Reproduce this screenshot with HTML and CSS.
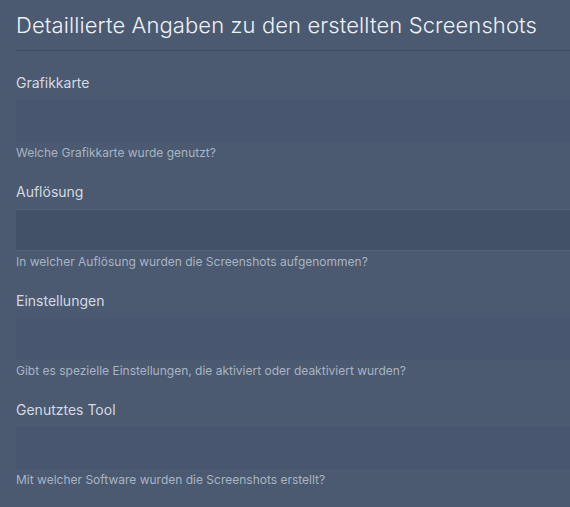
FILE: index.html
```html
<!DOCTYPE html>
<html lang="de">
<head>
<meta charset="utf-8">
<link rel="stylesheet" href="styles.css">
</head>
<body>
<div class="page">
  <h1 class="title">Detaillierte Angaben zu den erstellten Screenshots</h1>
  <div class="field">
    <label class="label">Grafikkarte</label>
    <div class="input"></div>
    <p class="help">Welche Grafikkarte wurde genutzt?</p>
  </div>
  <div class="field">
    <label class="label">Auflösung</label>
    <div class="input input-active"></div>
    <p class="help">In welcher Auflösung wurden die Screenshots aufgenommen?</p>
  </div>
  <div class="field">
    <label class="label">Einstellungen</label>
    <div class="input"></div>
    <p class="help">Gibt es spezielle Einstellungen, die aktiviert oder deaktiviert wurden?</p>
  </div>
  <div class="field">
    <label class="label">Genutztes Tool</label>
    <div class="input"></div>
    <p class="help">Mit welcher Software wurden die Screenshots erstellt?</p>
  </div>
</div>
</body>
</html>
```
FILE: styles.css
```css
html, body {
  margin: 0;
  padding: 0;
  background: #4b5a71;
  height: 100%;
}
body {
  font-family: Inter, "Noto Sans", sans-serif;
  overflow: hidden;
}
.page {
  padding-left: 16px;
}
.title {
  margin: 0;
  padding-top: 11px;
  padding-bottom: 11px;
  font-size: 22px;
  letter-spacing: 0.1px;
  line-height: 28px;
  font-weight: 300;
  color: #eef1f5;
  border-bottom: 1px solid #3f4c5f;
}
.field {
  display: flex;
  flex-direction: column;
}
.field:first-of-type {
  margin-top: 22px;
}
.field + .field {
  margin-top: 21px;
}
.label {
  font-size: 14px;
  line-height: 20px;
  color: #d3d9e2;
}
.input {
  margin-top: 7px;
  height: 42px;
  background: #48576f;
}
.input-active {
  background: #435167;
  border-top: 1px solid #52627a;
  border-bottom: 1px solid #52627a;
  height: 40px;
}
.help {
  margin: 3px 0 0 0;
  font-size: 12px;
  line-height: 16px;
  color: #a9b4c3;
}
```
